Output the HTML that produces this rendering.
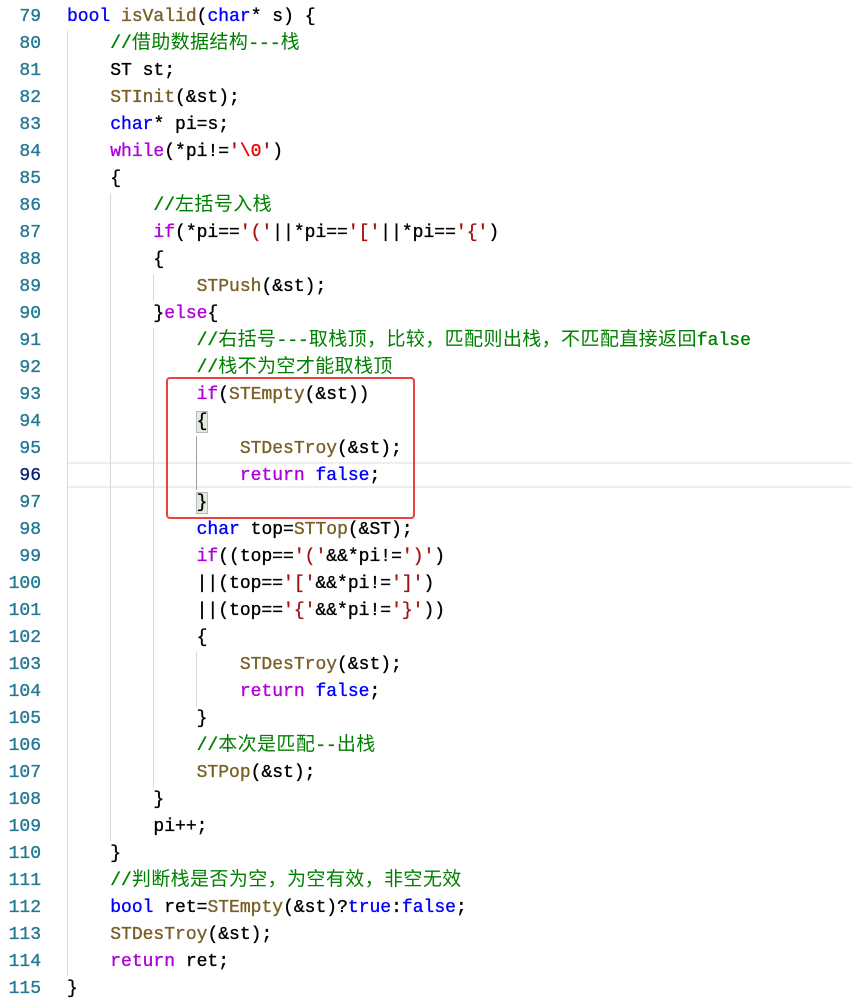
<!DOCTYPE html>
<html><head><meta charset="utf-8"><style>
html,body{margin:0;padding:0;background:#fff;width:852px;height:1006px;overflow:hidden;position:relative}
.l{position:absolute;left:0;height:27px;line-height:27px;white-space:pre;font-family:"Liberation Mono","Noto Sans CJK SC",monospace;font-size:18px;color:#000;-webkit-text-stroke:0.35px currentColor}
.n{position:absolute;left:0;width:41px;text-align:right;color:#237893}
.t{position:absolute;left:67px}
.k{color:#0000ff}.f{color:#795e26}.c{color:#008000}.p{color:#af00db}.s{color:#a31515}.e{color:#ee0000}
.z{letter-spacing:0.4px;font-family:"Noto Sans CJK SC",sans-serif;font-size:19px;line-height:0;-webkit-text-stroke:0}
.g{position:absolute;width:1px;background:#d8d8d8}
.b{background:#e4ece0;outline:1px solid #b9b9b9}
</style></head><body>
<div style="position:absolute;left:67px;right:0;top:462px;height:26px;border-top:2px solid #eeeeee;border-bottom:2px solid #eeeeee;box-sizing:border-box"></div>
<div class="g" style="left:67px;top:31px;height:945px"></div>
<div class="g" style="left:110px;top:193px;height:648px"></div>
<div class="g" style="left:153px;top:274px;height:27px"></div>
<div class="g" style="left:153px;top:328px;height:459px"></div>
<div class="g" style="left:196px;top:436px;height:54px;background:#a0a0a0"></div>
<div class="g" style="left:196px;top:652px;height:54px"></div>
<div style="position:absolute;left:166px;top:377px;width:249px;height:142px;border:2px solid #ee4040;border-radius:4px;box-sizing:border-box"></div>
<div class="l" style="top:4px"><span class="n">79</span><span class="t"><span class="k">bool</span> <span class="f">isValid</span>(<span class="k">char</span>* s) {</span></div>
<div class="l" style="top:31px"><span class="n">80</span><span class="t">    <span class="c">//<span class="z">借助数据结构</span>---<span class="z">栈</span></span></span></div>
<div class="l" style="top:58px"><span class="n">81</span><span class="t">    ST st;</span></div>
<div class="l" style="top:85px"><span class="n">82</span><span class="t">    <span class="f">STInit</span>(&amp;st);</span></div>
<div class="l" style="top:112px"><span class="n">83</span><span class="t">    <span class="k">char</span>* pi=s;</span></div>
<div class="l" style="top:139px"><span class="n">84</span><span class="t">    <span class="p">while</span>(*pi!=<span class="s">'</span><span class="e">\0</span><span class="s">'</span>)</span></div>
<div class="l" style="top:166px"><span class="n">85</span><span class="t">    {</span></div>
<div class="l" style="top:193px"><span class="n">86</span><span class="t">        <span class="c">//<span class="z">左括号入栈</span></span></span></div>
<div class="l" style="top:220px"><span class="n">87</span><span class="t">        <span class="p">if</span>(*pi==<span class="s">'('</span>||*pi==<span class="s">'['</span>||*pi==<span class="s">'{'</span>)</span></div>
<div class="l" style="top:247px"><span class="n">88</span><span class="t">        {</span></div>
<div class="l" style="top:274px"><span class="n">89</span><span class="t">            <span class="f">STPush</span>(&amp;st);</span></div>
<div class="l" style="top:301px"><span class="n">90</span><span class="t">        }<span class="p">else</span>{</span></div>
<div class="l" style="top:328px"><span class="n">91</span><span class="t">            <span class="c">//<span class="z">右括号</span>---<span class="z">取栈顶，比较，匹配则出栈，不匹配直接返回</span>false</span></span></div>
<div class="l" style="top:355px"><span class="n">92</span><span class="t">            <span class="c">//<span class="z">栈不为空才能取栈顶</span></span></span></div>
<div class="l" style="top:382px"><span class="n">93</span><span class="t">            <span class="p">if</span>(<span class="f">STEmpty</span>(&amp;st))</span></div>
<div class="l" style="top:409px"><span class="n">94</span><span class="t">            <span class="b">{</span></span></div>
<div class="l" style="top:436px"><span class="n">95</span><span class="t">                <span class="f">STDesTroy</span>(&amp;st);</span></div>
<div class="l" style="top:463px"><span class="n" style="color:#0b216f">96</span><span class="t">                <span class="p">return</span> <span class="k">false</span>;</span></div>
<div class="l" style="top:490px"><span class="n">97</span><span class="t">            <span class="b">}</span></span></div>
<div class="l" style="top:517px"><span class="n">98</span><span class="t">            <span class="k">char</span> top=<span class="f">STTop</span>(&amp;ST);</span></div>
<div class="l" style="top:544px"><span class="n">99</span><span class="t">            <span class="p">if</span>((top==<span class="s">'('</span>&amp;&amp;*pi!=<span class="s">')'</span>)</span></div>
<div class="l" style="top:571px"><span class="n">100</span><span class="t">            ||(top==<span class="s">'['</span>&amp;&amp;*pi!=<span class="s">']'</span>)</span></div>
<div class="l" style="top:598px"><span class="n">101</span><span class="t">            ||(top==<span class="s">'{'</span>&amp;&amp;*pi!=<span class="s">'}'</span>))</span></div>
<div class="l" style="top:625px"><span class="n">102</span><span class="t">            {</span></div>
<div class="l" style="top:652px"><span class="n">103</span><span class="t">                <span class="f">STDesTroy</span>(&amp;st);</span></div>
<div class="l" style="top:679px"><span class="n">104</span><span class="t">                <span class="p">return</span> <span class="k">false</span>;</span></div>
<div class="l" style="top:706px"><span class="n">105</span><span class="t">            }</span></div>
<div class="l" style="top:733px"><span class="n">106</span><span class="t">            <span class="c">//<span class="z">本次是匹配</span>--<span class="z">出栈</span></span></span></div>
<div class="l" style="top:760px"><span class="n">107</span><span class="t">            <span class="f">STPop</span>(&amp;st);</span></div>
<div class="l" style="top:787px"><span class="n">108</span><span class="t">        }</span></div>
<div class="l" style="top:814px"><span class="n">109</span><span class="t">        pi++;</span></div>
<div class="l" style="top:841px"><span class="n">110</span><span class="t">    }</span></div>
<div class="l" style="top:868px"><span class="n">111</span><span class="t">    <span class="c">//<span class="z">判断栈是否为空，为空有效，非空无效</span></span></span></div>
<div class="l" style="top:895px"><span class="n">112</span><span class="t">    <span class="k">bool</span> ret=<span class="f">STEmpty</span>(&amp;st)?<span class="k">true</span>:<span class="k">false</span>;</span></div>
<div class="l" style="top:922px"><span class="n">113</span><span class="t">    <span class="f">STDesTroy</span>(&amp;st);</span></div>
<div class="l" style="top:949px"><span class="n">114</span><span class="t">    <span class="p">return</span> ret;</span></div>
<div class="l" style="top:976px"><span class="n">115</span><span class="t">}</span></div>
</body></html>
